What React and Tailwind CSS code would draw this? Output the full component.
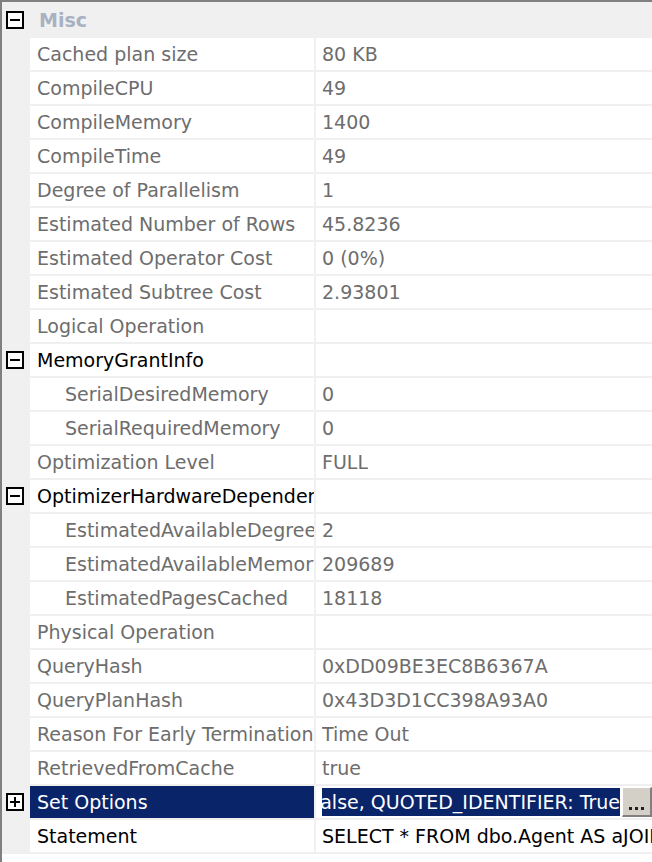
import React from 'react';

const rows = [
    { label: 'Cached plan size', value: '80 KB' },
    { label: 'CompileCPU', value: '49' },
    { label: 'CompileMemory', value: '1400' },
    { label: 'CompileTime', value: '49' },
    { label: 'Degree of Parallelism', value: '1' },
    { label: 'Estimated Number of Rows', value: '45.8236' },
    { label: 'Estimated Operator Cost', value: '0 (0%)' },
    { label: 'Estimated Subtree Cost', value: '2.93801' },
    { label: 'Logical Operation', value: '' },
    { label: 'MemoryGrantInfo', value: '', group: 'minus' },
    { label: 'SerialDesiredMemory', value: '0', indent: true },
    { label: 'SerialRequiredMemory', value: '0', indent: true },
    { label: 'Optimization Level', value: 'FULL' },
    { label: 'OptimizerHardwareDependentProperties', value: '', group: 'minus' },
    { label: 'EstimatedAvailableDegreeOfParallelism', value: '2', indent: true },
    { label: 'EstimatedAvailableMemoryGrant', value: '209689', indent: true },
    { label: 'EstimatedPagesCached', value: '18118', indent: true },
    { label: 'Physical Operation', value: '' },
    { label: 'QueryHash', value: '0xDD09BE3EC8B6367A' },
    { label: 'QueryPlanHash', value: '0x43D3D1CC398A93A0' },
    { label: 'Reason For Early Termination Of Statement Optimization', value: 'Time Out' },
    { label: 'RetrievedFromCache', value: 'true' },
    { label: 'Set Options', value: 'ANSI_NULLS: True, ANSI_PADDING: True, ANSI_WARNINGS: True, ARITHABORT: True, CONCAT_NULL_YIELDS_NULL: True, NUMERIC_ROUNDABORT: False, QUOTED_IDENTIFIER: True', group: 'plus', selected: true },
    { label: 'Statement', value: 'SELECT * FROM dbo.Agent AS aJOIN dbo.Customer AS c', dark: true },
];

const Box = ({ plus }) => (
    <div className="relative w-[18px] h-[18px] border-2 border-black bg-white">
        <div className="absolute left-[2px] top-[6px] w-[10px] h-[2px] bg-black" />
        {plus && <div className="absolute left-[6px] top-[2px] w-[2px] h-[10px] bg-black" />}
    </div>
);

const Row = ({ row }) => {
    const dark = row.group || row.dark;
    const textColor = row.selected ? 'text-white' : dark ? 'text-black' : 'text-[#6d6d6d]';
    return (
        <div className="flex h-[34px] border-b-2 border-[#f0f0f0]">
            <div className="w-[28px] shrink-0 bg-[#f0f0f0] flex items-center pl-[4px]">
                {row.group && <Box plus={row.group === 'plus'} />}
            </div>
            <div
                className={`w-[284px] shrink-0 overflow-hidden whitespace-nowrap flex items-center ${row.indent ? 'pl-[35px]' : 'pl-[7px]'} ${row.selected ? 'bg-[#0a246a]' : 'bg-white'} ${textColor}`}
            >
                {row.label}
            </div>
            <div className="w-[2px] shrink-0 bg-[#f0f0f0]" />
            <div className="flex-1 min-w-0 bg-white flex items-center pl-[6px]">
                {row.selected ? (
                    <>
                        <div className="flex-1 min-w-0 h-[28px] overflow-hidden whitespace-nowrap flex justify-end items-center bg-[#0a246a] text-white">
                            <span className="shrink-0">{row.value}</span>
                        </div>
                        <div className="w-[30px] h-[30px] shrink-0 ml-[2px] bg-[#d4d0c8] border-t border-l border-white border-r-2 border-b-2 border-r-[#808080] border-b-[#808080] flex items-end justify-center pb-[5px] gap-[3px]">
                            <div className="w-[3px] h-[3px] bg-[#202020]" />
                            <div className="w-[3px] h-[3px] bg-[#202020]" />
                            <div className="w-[3px] h-[3px] bg-[#202020]" />
                        </div>
                    </>
                ) : (
                    <span className={`whitespace-nowrap overflow-hidden ${row.dark ? 'text-black' : 'text-[#6d6d6d]'}`}>{row.value}</span>
                )}
            </div>
        </div>
    );
};

export default function App() {
    return (
        <div
            className="w-[652px] h-[862px] bg-white border-l-2 border-t-2 border-[#808080] overflow-hidden text-[19px] leading-[24px]"
            style={{ fontFamily: '"DejaVu Sans", Verdana, sans-serif' }}
        >
            <div className="flex h-[36px] bg-[#f0f0f0] items-center">
                <div className="w-[28px] shrink-0 pl-[4px]">
                    <Box />
                </div>
                <div className="pl-[9px] font-bold text-[#a9b1c2]">Misc</div>
            </div>
            {rows.map((row) => (
                <Row key={row.label} row={row} />
            ))}
        </div>
    );
}
